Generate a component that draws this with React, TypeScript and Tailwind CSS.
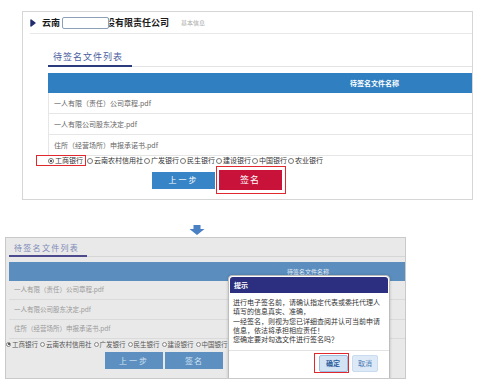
import React from "react";

const banks = ["云南农村信用社", "广发银行", "民生银行", "建设银行", "中国银行", "农业银行"];
const files = [
  "一人有限（责任）公司章程.pdf",
  "一人有限公司股东决定.pdf",
  "住所（经营场所）申报承诺书.pdf",
];

function RadioTop({ checked }: { checked?: boolean }) {
  return (
    <span className="inline-flex w-[6px] h-[6px] rounded-full border border-[#777] bg-white items-center justify-center shrink-0">
      {checked ? <span className="w-[2px] h-[2px] rounded-full bg-[#222]" /> : null}
    </span>
  );
}

function RadioBottom({ checked }: { checked?: boolean }) {
  return (
    <span className="inline-flex w-[5px] h-[5px] rounded-full border border-[#888] bg-[#f4f4f4] items-center justify-center shrink-0">
      {checked ? <span className="w-[2px] h-[2px] rounded-full bg-[#333]" /> : null}
    </span>
  );
}

function TopPanel() {
  return (
    <div className="w-[451px] h-[189px] border border-[#d6d6d6] bg-white">
      <div className="ml-[7px] h-[22px] border-b border-[#e8e8e8] flex items-center">
        <svg width="6" height="8" viewBox="0 0 6 8">
          <path d="M1 1 L5 4 L1 7 Z" fill="#1f2c6e" stroke="#1f2c6e" strokeWidth="1.4" strokeLinejoin="round" />
        </svg>
        <span className="ml-[6px] text-[9px] font-bold text-[#1a1a1a] leading-none">云南</span>
        <span className="relative z-10 ml-[2px] -mr-[3px] w-[47px] h-[12px] bg-white border border-[#8da0b8] rounded-[2px]" />
        <span className="text-[9px] font-bold text-[#1a1a1a] leading-none">设有限责任公司</span>
        <span className="ml-[12px] text-[6px] text-[#aaaaaa] leading-none">基本信息</span>
      </div>
      <div className="ml-[25px] h-[33px] border-b border-[#e3e3e3] flex items-end">
        <div className="w-[84px] h-[16px] -mb-px border-b-2 border-[#2a3a7c] pl-[5px] text-[9px] tracking-[1px] leading-[12px] text-[#4a5d9e]">
          待签名文件列表
        </div>
      </div>
      <div className="ml-[25px] mt-[6px]">
        <div className="h-[20px] bg-[#2f7fc1] text-white text-[7px] font-bold flex items-center pl-[302px]">
          待签名文件名称
        </div>
        {files.map((f) => (
          <div key={f} className="h-[21px] border-b border-l border-[#e6e6e6] flex items-center pl-[5px] text-[7px] text-[#666]">
            {f}
          </div>
        ))}
      </div>
      <div className="-mt-px h-[11px] flex items-center text-[7px] text-[#333] leading-none">
        <div className="ml-[13px] h-[11px] w-[50px] border-[1.5px] border-[#e0282e] flex items-center pl-[11px] gap-[1px]">
          <RadioTop checked />
          <span>工商银行</span>
        </div>
        {banks.map((b) => (
          <div key={b} className="ml-[1px] flex items-center gap-[1px]">
            <RadioTop />
            <span>{b}</span>
          </div>
        ))}
      </div>
      <div className="h-[28px] flex items-center">
        <div className="ml-[129px] w-[63px] h-[17px] bg-[#3784c6] text-white text-[8px] tracking-[2px] flex items-center justify-center">
          上一步
        </div>
        <div className="ml-[1px] h-[28px] border-[1.5px] border-[#e0282e] pl-[1.5px] pr-[3.5px] flex items-center">
          <div className="w-[63px] h-[20px] bg-[#c8123a] text-white text-[9px] tracking-[1px] flex items-center justify-center">
            签名
          </div>
        </div>
      </div>
    </div>
  );
}

function BottomPanel() {
  return (
    <div className="relative w-[401px] h-[142px] border border-[#c9c9c9] bg-[#e9e9e9] overflow-hidden">
      <div className="ml-[3px] h-[19px] border-b border-[#d6d6d6] flex items-end">
        <div className="w-[78px] h-[15px] -mb-px border-b-2 border-[#4b4b8e] pl-[5px] text-[8px] tracking-[1.3px] leading-[11px] text-[#7d8ab8]">
          待签名文件列表
        </div>
      </div>
      <div className="ml-[3px] mt-[5px]">
        <div className="h-[19px] bg-[#5b8ebf] text-[#e3ecf5] text-[6px] flex items-center pl-[278px]">
          待签名文件名称
        </div>
        <div className="h-[19px] border-b border-[#dadada] flex items-center pl-[5px] text-[6.5px] text-[#9a9a9a]">{files[0]}</div>
        <div className="h-[20px] border-b border-[#dadada] flex items-center pl-[5px] text-[6.5px] text-[#9a9a9a]">{files[1]}</div>
        <div className="h-[19px] border-b border-[#dadada] flex items-center pl-[5px] text-[6.5px] text-[#9a9a9a]">{files[2]}</div>
      </div>
      <div className="w-[222px] overflow-hidden h-[10px] flex items-center text-[6.5px] text-[#555] leading-none whitespace-nowrap">
        <div className="flex items-center gap-[1px] shrink-0">
          <RadioBottom checked />
          <span>工商银行</span>
        </div>
        {banks.map((b) => (
          <div key={b} className="ml-[2px] flex items-center gap-[1px] shrink-0">
            <RadioBottom />
            <span>{b}</span>
          </div>
        ))}
      </div>
      <div className="mt-[3px] flex">
        <div className="ml-[99px] w-[58px] h-[17px] bg-[#5d90c1] text-[#d3e2f1] text-[8px] tracking-[2px] flex items-center justify-center">
          上一步
        </div>
        <div className="ml-[2px] w-[58px] h-[17px] bg-[#5d90c1] text-[#d3e2f1] text-[8px] tracking-[1px] flex items-center justify-center">
          签名
        </div>
      </div>

      <div className="absolute left-[222px] top-[37px] w-[162px] h-[110px] bg-white border border-[#bdbdbd] rounded-t-[4px] shadow-[0_0_3px_rgba(0,0,0,0.2)]">
        <div className="mx-[1px] mt-[1px] h-[16px] bg-[#2c2f7f] rounded-t-[3px] text-white text-[7px] font-bold pl-[4px] flex items-center">
          提示
        </div>
        <div className="pl-[4px] pt-[5px] text-[7px] leading-[9.3px] text-[#333] whitespace-nowrap">
          <div>进行电子签名前，请确认指定代表或委托代理人</div>
          <div>填写的信息真实、准确，</div>
          <div>一经签名，则视为您已详细查阅并认可当前申请</div>
          <div>信息，依法将承担相应责任！</div>
          <div>您确定要对勾选文件进行签名吗？</div>
        </div>
        <div className="mt-[6px] border-t border-[#e2e2e2] pt-[2px] pr-[11px] flex items-center justify-end">
          <div className="border-[1.5px] border-[#e0282e] pl-[4px] pr-[0.5px] py-[0.5px]">
            <div className="w-[29px] h-[17px] bg-[#d3e3f4] border border-[#9bbde0] rounded-[2px] text-[#2b5d9c] text-[7px] font-bold flex items-center justify-center">
              确定
            </div>
          </div>
          <div className="ml-[3px] w-[26px] h-[17px] bg-[#dde9f6] border border-[#c9dbee] rounded-[2px] text-[#4a7ab5] text-[7px] flex items-center justify-center">
            取消
          </div>
        </div>
      </div>
    </div>
  );
}

export default function App() {
  return (
    <div className="w-[485px] h-[389px] bg-white overflow-hidden font-['Noto_Sans_CJK_SC','Liberation_Sans',sans-serif]">
      <div className="pt-[11px] pl-[22px]">
        <TopPanel />
      </div>
      <div className="mt-[25px] ml-[189px] w-[16px] h-[10px]">
        <svg width="16" height="10" viewBox="0 0 16 10">
          <path d="M4.5 0 H11.5 V4 H15.5 L8 10 L0.5 4 H4.5 Z" fill="#4a80c4" />
        </svg>
      </div>
      <div className="mt-[2px] ml-[5px]">
        <BottomPanel />
      </div>
    </div>
  );
}
